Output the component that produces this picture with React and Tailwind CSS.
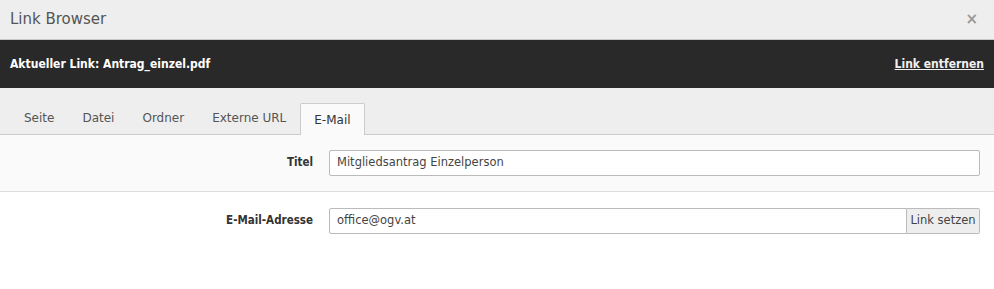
export default function App() {
  const tabs = ["Seite", "Datei", "Ordner", "Externe URL", "E-Mail"];
  const cond = { fontFamily: '"DejaVu Sans Condensed", "DejaVu Sans", Verdana, sans-serif', fontStretch: "condensed" };
  return (
    <div className="w-[994px] h-[289px] bg-white text-[12px] text-[#333]" style={{ fontFamily: '"DejaVu Sans", Verdana, sans-serif' }}>
      <div className="h-[40px] bg-[#eeeeee] border-b border-[#c8c8c8] flex items-center justify-between pl-[10px] pr-[16px]">
        <span className="text-[15px] text-[#555]">Link Browser</span>
        <span className="text-[15px] font-bold text-[#999] leading-none">×</span>
      </div>
      <div className="h-[48px] bg-[#292929] text-white flex items-center justify-between px-[10px]">
        <span className="font-bold text-[12px]" style={cond}>Aktueller Link: Antrag_einzel.pdf</span>
        <span className="font-bold text-[12px] underline text-[#f0f0f0]" style={cond}>Link entfernen</span>
      </div>
      <div className="h-[47px] bg-[#eeeeee] border-b border-[#cccccc] flex items-end pl-[10px]">
        {tabs.map((t) => (
          <div
            key={t}
            className={
              t === "E-Mail"
                ? "h-[32px] px-[13px] flex items-center bg-[#fafafa] border border-b-0 border-[#cccccc] rounded-t-[2px] text-[#333] -mb-px"
                : "h-[32px] px-[13px] flex items-center border border-transparent text-[#555]"
            }
          >
            {t}
          </div>
        ))}
      </div>
      <div className="h-[57px] bg-[#fafafa] border-b border-[#dddddd] flex items-center">
        <div className="w-[313px] text-right font-bold text-[11.5px] text-[#333]" style={cond}>Titel</div>
        <div className="ml-[16px] w-[651px] h-[26px] border border-[#bbbbbb] rounded-[2px] bg-white flex items-center px-[7px] text-[11.5px] text-[#444]">
          Mitgliedsantrag Einzelperson
        </div>
      </div>
      <div className="h-[57px] bg-white flex items-center">
        <div className="w-[313px] text-right font-bold text-[11.5px] text-[#333]" style={cond}>E-Mail-Adresse</div>
        <div className="ml-[16px] w-[651px] h-[26px] flex">
          <div className="flex-1 border border-[#bbbbbb] rounded-l-[2px] bg-white flex items-center px-[7px] text-[11.5px] text-[#444]">
            office@ogv.at
          </div>
          <div className="w-[73px] border border-l-0 border-[#bbbbbb] rounded-r-[2px] bg-[#eeeeee] flex items-center justify-center text-[11.5px] text-[#444]">
            Link setzen
          </div>
        </div>
      </div>
    </div>
  );
}
